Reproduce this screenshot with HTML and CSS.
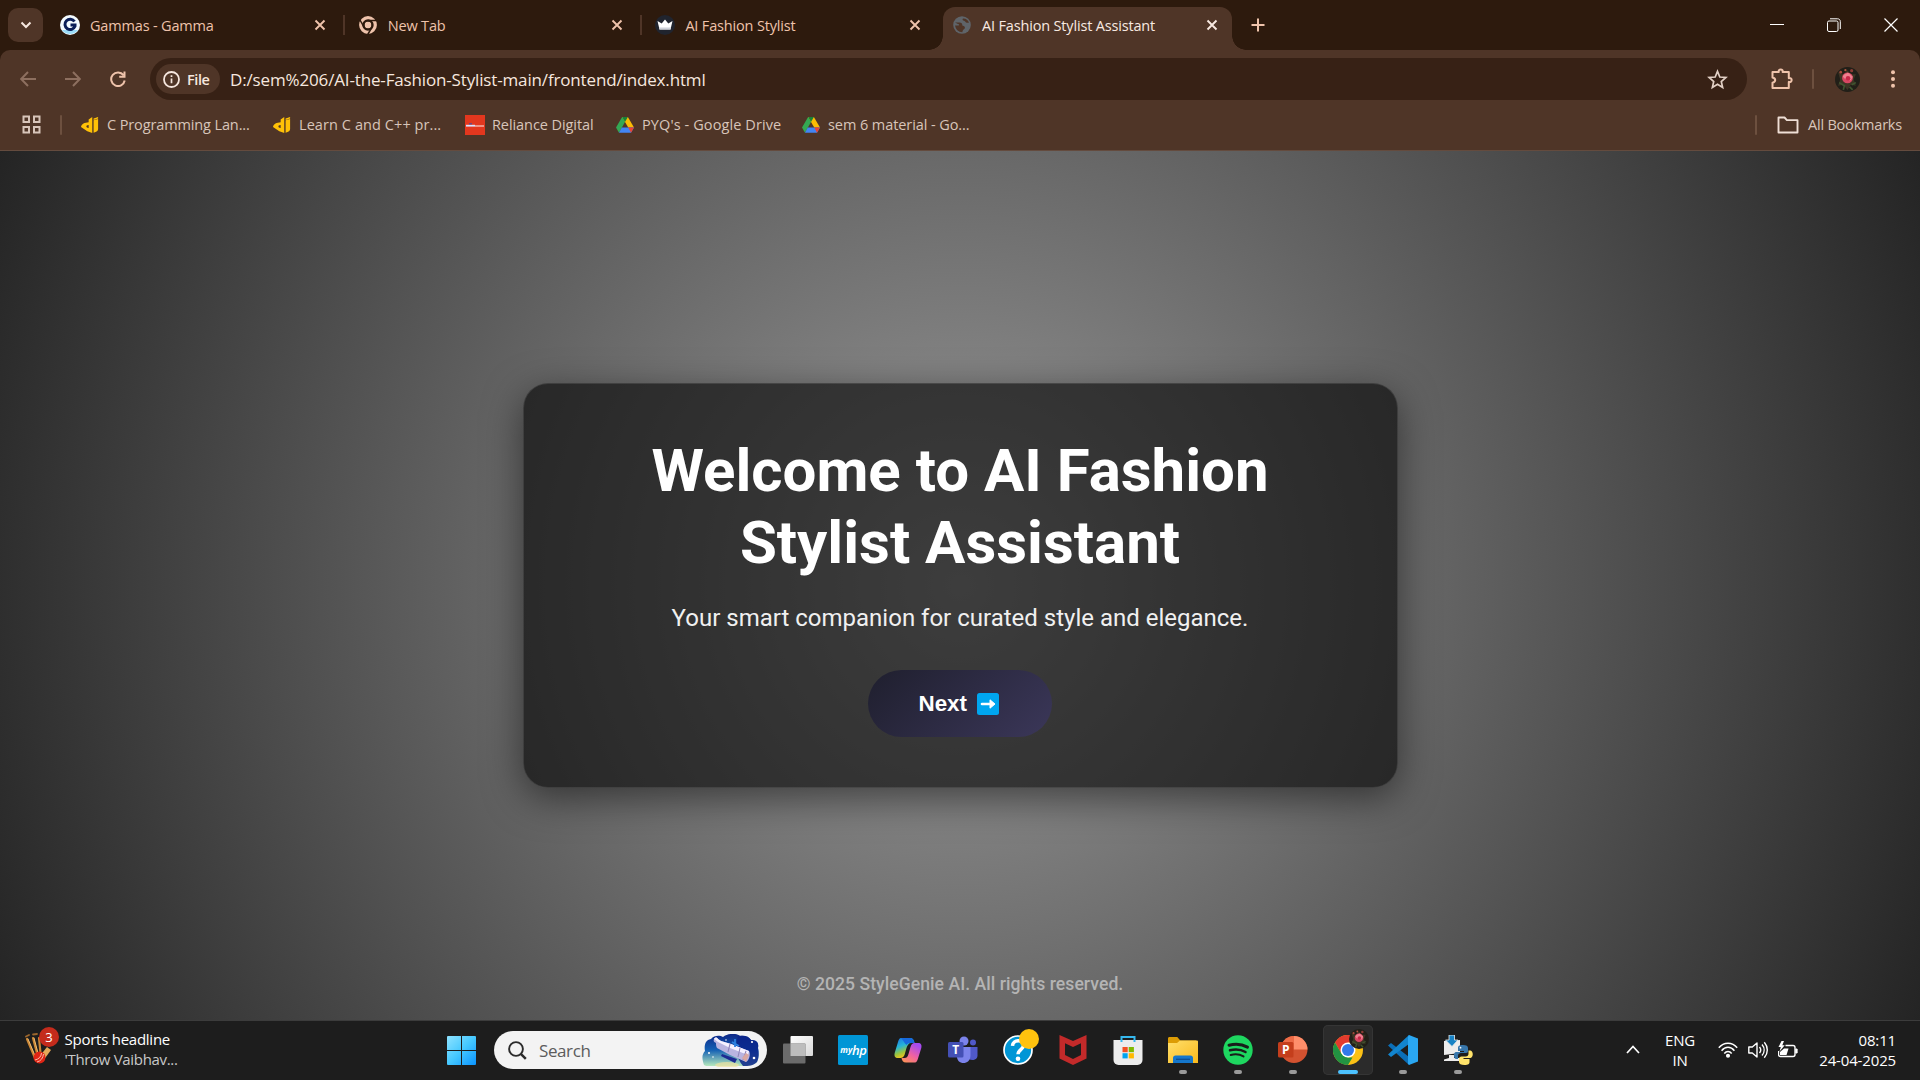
FILE: index.html
```html
<!DOCTYPE html>
<html lang="en">
<head>
<meta charset="utf-8">
<title>AI Fashion Stylist Assistant</title>
<link rel="stylesheet" href="styles.css">
</head>
<body>
<svg class="defs" width="0" height="0" aria-hidden="true">
  <defs>
    <symbol id="close" viewBox="0 0 12 12"><path d="M1.5 1.5l9 9M10.5 1.5l-9 9" fill="none" stroke="currentColor" stroke-width="1.9"/></symbol>
    <symbol id="drive" viewBox="0 0 20 18"><path d="M6.8 0h6.4L10 5.6 3.3 17.6 0 11.8z" fill="#34a853"/><path d="M13.2 0L20 11.8h-6.4L6.8 0z" fill="#fbbc04"/><path d="M6.8 0h6.4L10 5.6z" fill="#188038"/><path d="M6.4 11.8H20l-3.3 5.9H3.3z" fill="#4285f4"/><path d="M13.6 11.8H20l-3.3 5.9z" fill="#ea4335"/></symbol>
    <symbol id="dj" viewBox="0 0 20 20"><path d="M12.500 1v18L7 17 0 12.200C.5 9 4 7.200 8.500 7V4zM8.500 10c-2 .2-2.500.9-2.500 1.700s.8 1.300 2.500 1.600z" fill="#ffc107" fill-rule="evenodd"/><path d="M14 4.800l5-1.400v11.100c0 2-1.500 3.200-5 4zM14 2.700l5-1.700v1.900l-5 1.500z" fill="#ffc107"/></symbol>
    <symbol id="rose" viewBox="0 0 24 24"><circle cx="12" cy="12" r="12" fill="#211f18"/><path d="M3 5l5 2 4-4 3 4 5 0-2 5 2 6-5-1-3 5-4-5-5 1 2-6z" fill="#3d3524"/><path d="M4 15l5 3-1 4M16 17l4-2M14 19l3 3" stroke="#3f5530" stroke-width="1.600" fill="none"/><circle cx="12" cy="10.500" r="5.200" fill="#d64762"/><path d="M7.500 9c1.500-3 3.500-2 4.500-3.500 2 0 3 2.500 5 3.500-.5 2-1 2.500-2.500 4-3-2-4.500 0-7-4" fill="#f0808f"/><circle cx="12.500" cy="10.800" r="2.200" fill="#c72747"/><circle cx="5.500" cy="5" r="1.300" fill="#a24a3c"/><circle cx="16" cy="3.500" r="1.500" fill="#8c3c34"/><circle cx="10" cy="3" r="1.100" fill="#b0573f"/></symbol>
    <linearGradient id="winG" x2="1" y2="1"><stop stop-color="#8fe3ff"/><stop offset=".5" stop-color="#45c8ff"/><stop offset="1" stop-color="#0a93ff"/></linearGradient>
    <linearGradient id="copL" x2=".4" y2="1"><stop stop-color="#1c6fe4"/><stop offset=".45" stop-color="#25b5d8"/><stop offset=".75" stop-color="#9bc53d"/><stop offset="1" stop-color="#ffc21a"/></linearGradient>
    <linearGradient id="copR" x1=".6" x2="0" y2="1"><stop stop-color="#a64bf0"/><stop offset=".5" stop-color="#f062a0"/><stop offset="1" stop-color="#ff9a4a"/></linearGradient>
    <linearGradient id="foldG" x2="1" y2="1"><stop stop-color="#ffdf6b"/><stop offset="1" stop-color="#f9b91c"/></linearGradient>
    <linearGradient id="spaceG" x2="0" y2="1"><stop stop-color="#0d2687"/><stop offset=".5" stop-color="#1360b4"/><stop offset="1" stop-color="#b5e8bd"/></linearGradient>
    <linearGradient id="tvG" x2="1" y2="1"><stop stop-color="#fff"/><stop offset="1" stop-color="#d8d8d8"/></linearGradient>
  </defs>
</svg>

<header class="browser">
  <div class="tabstrip">
    <button class="tab-search"><svg width="12" height="8" viewBox="0 0 12 8"><path d="M1.500 1.500L6 6l4.500-4.500" fill="none" stroke="#f6e7df" stroke-width="2"/></svg></button>
    <div class="tab">
      <svg class="fav" viewBox="0 0 20 20"><circle cx="10" cy="10" r="10" fill="#f4fbff"/><path d="M2 15a10 10 0 0 0 16 0z" fill="#9adcf8"/><path d="M14.500 6.500A5.200 5.200 0 1 0 15 11.300V10h-4.500" fill="none" stroke="#0b1e57" stroke-width="3"/></svg>
      <span class="title">Gammas - Gamma</span><svg class="x"><use href="#close"/></svg>
    </div>
    <div class="tab">
      <svg class="fav" viewBox="0 0 20 20"><circle cx="10" cy="10" r="7.300" fill="none" stroke="#efc3ab" stroke-width="3.200"/><circle cx="10" cy="10" r="3.400" fill="#efc3ab"/><circle cx="10" cy="10" r="4.300" fill="none" stroke="#2d1a0d" stroke-width="1.400"/><path d="M10 5.500h8.500M6.200 12.300L2 5M13.900 12.300L9.700 19.500" stroke="#2d1a0d" stroke-width="1.500"/></svg>
      <span class="title">New Tab</span><svg class="x"><use href="#close"/></svg>
    </div>
    <div class="tab last">
      <svg class="fav" viewBox="0 0 20 20"><circle cx="10" cy="10" r="10" fill="#20242e"/><path d="M2.500 6l4.200 2.600L10 4.500l3.300 4.100L17.500 6l-2 8.500h-11z" fill="#fff"/><path d="M4 12.500h12l-.5 2h-11z" fill="#cfd2da"/></svg>
      <span class="title">AI Fashion Stylist</span><svg class="x"><use href="#close"/></svg>
    </div>
    <div class="tab active">
      <svg class="fav" viewBox="0 0 20 20"><circle cx="10" cy="10" r="8.800" fill="#5f6469"/><path d="M3 7.500h4.500c2 0 2.800 1 2.800 2.500 0 1.200 2.600.7 2.600 2.500 0 2-2.300 1.500-2.500 4.800-4-.3-7-3-7.300-6.800h3.200c1.400 0 1-1.500-.3-1.500zM11 3.500c-1 1.200-.2 2 1 2.300 1.500.3 1.200 2 3 2h2c-.8-2.600-3-4.500-6-4.300z" fill="#4f3527"/></svg>
      <span class="title">AI Fashion Stylist Assistant</span><svg class="x"><use href="#close"/></svg>
    </div>
    <button class="newtab"><svg width="14" height="14" viewBox="0 0 14 14"><path d="M7 .5v13M.5 7h13" stroke="#efc3ab" stroke-width="2"/></svg></button>
    <div class="winctl">
      <svg width="14" height="14" viewBox="0 0 14 14"><path d="M0 6.500h14" stroke="#fff"/></svg>
      <svg width="14" height="14" viewBox="0 0 14 14" fill="none" stroke="#fff"><rect x=".5" y="3" width="10.500" height="10.500" rx="1.500"/><path d="M3 .8h7.500c1.700 0 2.800 1 2.800 2.800V11"/></svg>
      <svg width="14" height="14" viewBox="0 0 14 14"><path d="M.5.5l13 13M13.500.5l-13 13" stroke="#fff" stroke-width="1.200"/></svg>
    </div>
  </div>

  <div class="toolbar">
    <div class="nav">
      <svg class="dim" width="16" height="16" viewBox="0 0 16 16"><path d="M16 8H1.500M8 1L1.200 8 8 15"/></svg>
      <svg class="dim" width="16" height="16" viewBox="0 0 16 16"><path d="M0 8h14.500M8 1l6.800 7L8 15"/></svg>
      <svg width="16" height="16" viewBox="0 0 16 16"><path d="M13.500 4.200A6.800 6.800 0 1 0 14.700 9.500M14.500.5v5.300H9.200"/></svg>
    </div>
    <div class="omnibox">
      <span class="chip"><svg width="17" height="17" viewBox="0 0 17 17"><circle cx="8.500" cy="8.500" r="7.500" fill="none" stroke="#f6e7df" stroke-width="1.800"/><path d="M8.500 7.500v4.800M8.500 4.300v1.800" stroke="#f6e7df" stroke-width="1.700"/></svg><span>File</span></span>
      <span class="url">D:/sem%206/AI-the-Fashion-Stylist-main/frontend/index.html</span>
      <svg class="star" viewBox="0 0 20 20"><path d="M10 2.200l2.200 5.400 5.800.5-4.400 3.800 1.300 5.700-4.900-3-4.900 3 1.300-5.700L2 8.100l5.800-.5z" fill="none" stroke="#e3d1c6" stroke-width="1.600"/></svg>
    </div>
    <div class="actions">
      <svg width="22" height="22" viewBox="0 0 22 22"><path d="M1.500 4h6.300a2 2 0 1 1 3.800 0h6.200v6.300a2 2 0 1 1 0 3.600v6.100H1.500v-5.200c3.600-.8 3.600-4.600 0-5.400z" fill="none" stroke="#efc3ab" stroke-width="2" stroke-linejoin="round"/></svg>
      <i class="sep"></i>
      <svg class="avatar" width="25" height="25"><use href="#rose"/></svg>
      <svg width="4" height="18" viewBox="0 0 4 18" fill="#efc3ab"><circle cx="2" cy="2.200" r="2"/><circle cx="2" cy="9" r="2"/><circle cx="2" cy="15.800" r="2"/></svg>
    </div>
  </div>

  <div class="bookmarks">
    <svg class="apps" width="19" height="19" viewBox="0 0 19 19" fill="none" stroke="#d8c5ba" stroke-width="2"><path d="M1.500 1.500h5.500V7H1.500zM12 1.500h5.500V7H12zM1.500 12h5.500v5.500H1.500zM12 12h5.500v5.500H12z"/></svg>
    <i class="sep"></i>
    <div class="bm b1"><svg><use href="#dj"/></svg><span>C Programming Lan...</span></div>
    <div class="bm b2"><svg><use href="#dj"/></svg><span>Learn C and C++ pr...</span></div>
    <div class="bm b3"><svg viewBox="0 0 20 20"><path d="M0 0h20v20H0z" fill="#e3371e"/><path d="M1 10.700h9" stroke="#d8e2ff" stroke-width="1.800"/><path d="M10 11h9" stroke="#fff" stroke-opacity=".65" stroke-width="1.400"/><path d="M4 8.800h3" stroke="#3d4aa5"/></svg><span>Reliance Digital</span></div>
    <div class="bm b4"><svg><use href="#drive"/></svg><span>PYQ's - Google Drive</span></div>
    <div class="bm b5"><svg><use href="#drive"/></svg><span>sem 6 material - Go...</span></div>
    <div class="allbm"><i class="sep"></i><svg width="22" height="18" viewBox="0 0 22 18"><path d="M1.500 1.500h6l2.400 2.600h10.600v12.400h-19z" fill="none" stroke="#efdfd6" stroke-width="1.900" stroke-linejoin="round"/></svg><span>All Bookmarks</span></div>
  </div>
</header>

<main class="page">
  <section class="card">
    <h1>Welcome to AI Fashion Stylist Assistant</h1>
    <p>Your smart companion for curated style and elegance.</p>
    <button class="next"><span>Next</span><svg width="22" height="22" viewBox="0 0 22 22"><rect width="22" height="22" rx="2.500" fill="#00a6f0"/><path d="M5 11h10" stroke="#fff" stroke-width="2.600" stroke-linecap="round"/><path d="M13 6.800l5 4.200-5 4.200z" fill="#fff" stroke="#fff" stroke-linejoin="round"/></svg></button>
  </section>
  <footer>© 2025 StyleGenie AI. All rights reserved.</footer>
</main>

<nav class="taskbar">
  <div class="widget">
    <div class="badgebox">
      <svg width="30" height="34" viewBox="0 0 30 34"><g fill="none" stroke-linecap="round"><path d="M2 6l8 19M8 5l4.500 17M14 5l1.500 15" stroke="#c98535" stroke-width="2.200"/><path d="M3 6l8 19M9 5l4.500 17" stroke="#f0bd72" stroke-width="1"/><path d="M1 3.500L4 2M8 1.500l4-.5" stroke="#9c662c" stroke-width="1.800"/></g><path d="M22 14l4 3-8 11-4-4z" fill="#e5a959"/><circle cx="14.500" cy="24.500" r="6" fill="#df2515"/><path d="M12 29c4-1 6-4 6.500-8M10 27c4-1 6-3 6.500-7" stroke="#ffc9b8" stroke-width=".9" fill="none"/></svg>
      <b class="badge">3</b>
    </div>
    <div class="news"><span class="n1">Sports headline</span><span class="n2">'Throw Vaibhav...</span></div>
  </div>

  <div class="center">
    <svg class="start" width="29" height="29" viewBox="0 0 29 29"><path d="M0 1a1 1 0 0 1 1-1h13v14H0zM15 0h13a1 1 0 0 1 1 1v13H15zM0 15h14v14H1a1 1 0 0 1-1-1zM15 15h14v13a1 1 0 0 1-1 1H15z" fill="url(#winG)"/></svg>
    <div class="search">
      <svg width="19" height="19" viewBox="0 0 19 19" fill="none" stroke="#2b2b2b"><circle cx="8" cy="8" r="6.900" stroke-width="1.900"/><path d="M12.800 12.800l5 5" stroke-width="2.500"/></svg>
      <span>Search</span>
      <svg class="scope" width="58" height="33" viewBox="0 0 58 33"><path d="M2 31C0 25-.5 21 3 17c-1-5 0-11 6-12 3-4 9-4 12-2 5-4 14-4 17-1 5-1 9 0 11 4 6 0 8 3 7 8 1 5 1 10-1 14-3 4-12 4-17 4H8c-3 0-5 0-6-1z" fill="url(#spaceG)"/><path d="M36 2c5-1 11 1 13 4 6 0 8 3 7 8 1 5 1 10-1 14-4 4-8 4-14 4-7-8-8-20-5-30z" fill="#0a2389" opacity=".85"/><ellipse cx="25" cy="31" rx="12" ry="3" fill="#f0dfa0" opacity=".7"/><path d="M20 20l15 5-2 4-14-7z" fill="#1c2a92"/><path d="M12 5c1-2 3-2 4 0l3 2 10 3 18 7c2 3 0 10-3 11L28 21l-13-7c-1-2-1-3-1-5-2-1-3-2-2-4z" fill="#b9b4e0"/><path d="M12 5c1-2 3-2 4 0l3 2 10 3 18 7-1 4-18-7-12-6z" fill="#f4f0ff"/><path d="M28 10l-2 8M38 14l-2 9M44 17l-3 9" stroke="#9085ba" stroke-width="1.100"/><path d="M40 24l4-5 3 2-3 7z" fill="#d9a7a2"/><path d="M33 5v8M30 8l7 4" stroke="#2b7fe0" stroke-width="1.800"/><g fill="#fff"><circle cx="7" cy="19" r="1"/><circle cx="24" cy="6" r=".8"/><circle cx="50" cy="8" r="1.100"/><circle cx="52" cy="24" r="1.300"/><circle cx="11" cy="23" r=".8"/></g></svg>
    </div>
    <div class="apps-row">
      <div class="slot"><svg viewBox="0 0 30 30"><rect x="7.500" y="1" width="22.500" height="20" rx="1" fill="url(#tvG)"/><rect x="0" y="8.500" width="22.500" height="20" rx="1" fill="#6b6b6b"/><path d="M7.500 8.500h15V21h-15z" fill="#bdbdbd"/></svg></div>
      <div class="slot"><svg viewBox="0 0 30 30"><rect width="30" height="30" rx="1.500" fill="#0096d6"/><text class="my" x="2.200" y="18">my</text><text class="hp" x="14" y="19.500">hp</text></svg></div>
      <div class="slot"><svg viewBox="0 0 30 30"><path d="M8 3h9c3 0 4 2 4.500 5h-3c-3 0-4 2-5 5l-2 7c-1 2-2 3-4 3H5c-3 0-4-2-3.300-5L5 7c.6-2.300 1.500-4 3-4z" fill="url(#copL)"/><path d="M8 3h9c3 0 4 2 4.500 5h-4c-2 0-3 .6-4 2C11 8 10 4.500 8 3z" fill="#1769dc"/><path d="M22 27.500h-9c-3 0-4-2-4.500-4.500h3c2 0 3-1 4-4l2-7c1-3 2-4 4-4H25c3 0 4 2 3.300 5L25 23.500c-.6 2.300-1.500 4-3 4z" fill="url(#copR)"/></svg></div>
      <div class="slot"><svg viewBox="0 0 30 30"><circle cx="25" cy="7.500" r="3" fill="#5059c9"/><path d="M19 12h10.500v8.500c0 3-2.500 4.500-5 4.500s-5-1-6-4z" fill="#5059c9"/><circle cx="16" cy="6" r="4.500" fill="#7b83eb"/><path d="M9 12h13.500v8.500c0 5-3.500 7.500-7 7.500S8.500 25.500 9 20.500z" fill="#7b83eb"/><rect x="0" y="7" width="15.500" height="15.500" rx="1.500" fill="#4450b5"/><text class="glyph" x="7.800" y="19" font-size="12">T</text></svg></div>
      <div class="slot"><svg viewBox="0 0 30 30"><circle cx="15" cy="15" r="14" fill="#0096d6" stroke="#fff" stroke-width="1.700"/><path d="M9.500 10.800c.3-6.500 11-6.600 11-.5 0 4.500-5.500 4.200-5.500 9" fill="none" stroke="#fff" stroke-width="3.500"/><circle cx="15" cy="23.700" r="2.300" fill="#fff"/></svg><i class="dot"></i></div>
      <div class="slot"><svg viewBox="0 0 30 30"><path d="M1.500 0L15 6 28.500 0v23.500L15 30 1.500 23.500z" fill="#c32a2a"/><path d="M7 8.200l8 3.700 8-3.700v11.700l-8 4-8-4z" fill="#1d1d1d"/></svg></div>
      <div class="slot"><svg viewBox="0 0 30 30"><path d="M.5 5h29v20a5 5 0 0 1-5 5h-19a5 5 0 0 1-5-5z" fill="#ececec"/><path d="M8.500 7V2h13v5" fill="none" stroke="#35b8ee" stroke-width="2"/><path d="M9.500 12h5.200v5.200H9.500z" fill="#f25022"/><path d="M15.700 12h5.200v5.200h-5.200z" fill="#7fba00"/><path d="M9.500 18.200h5.200v5.200H9.500z" fill="#00a4ef"/><path d="M15.700 18.200h5.200v5.200h-5.200z" fill="#ffb900"/></svg></div>
      <div class="slot run"><svg viewBox="0 0 30 30"><path d="M0 3.500C0 2.500.7 2 1.500 2h7.800l3 3.500H28V12H0z" fill="#dc9c05"/><path d="M0 8h9l3-2.500h17a1 1 0 0 1 1 1V28H0z" fill="url(#foldG)"/><path d="M5 28v-5c0-1.500 1-2.500 2.500-2.500h15c1.500 0 2.500 1 2.500 2.500v5z" fill="#1577cc"/><path d="M8 24.300h14" stroke="#0b4f94" stroke-width="1.300"/></svg></div>
      <div class="slot run"><svg viewBox="0 0 30 30"><circle cx="15" cy="15" r="14.700" fill="#1ed760"/><g fill="none" stroke="#191d1a" stroke-linecap="round"><path d="M6 10.200c6-1.700 13-1.200 18.500 1.900" stroke-width="3"/><path d="M7 15.300c5.500-1.500 11-.9 15.500 1.700" stroke-width="2.500"/><path d="M7.700 20c4.500-1.200 9-.8 12.800 1.400" stroke-width="2"/></g></svg></div>
      <div class="slot run"><svg viewBox="0 0 30 30"><circle cx="16" cy="14.500" r="13.500" fill="#d35230"/><path d="M16 1a13.500 13.500 0 0 0-13.500 13.500H16z" fill="#ed6c47"/><path d="M16 1a13.500 13.500 0 0 1 13.500 13.500H16z" fill="#ff8f6b"/><rect x="0" y="7" width="15.500" height="15.500" rx="1.500" fill="#c43e1c"/><text class="glyph" x="7.700" y="19" font-size="12">P</text></svg></div>
      <div class="slot current"><svg viewBox="0 0 30 30"><circle cx="15" cy="15" r="15" fill="#fbc116"/><path d="M2 7.500a15 15 0 0 1 26 0H15V15L8.500 18.800z" fill="#e33b2e"/><path d="M2 7.500L8.500 18.800l6.500 3.700h4.500L15 30A15 15 0 0 1 2 7.500z" fill="#229342"/><circle cx="15" cy="15" r="7.500" fill="#fff"/><circle cx="15" cy="15" r="6" fill="#3279ea"/></svg><svg class="rose"><use href="#rose"/></svg></div>
      <div class="slot run"><svg viewBox="0 0 30 30"><path d="M0 10.500l3-2.500L23 23.500 21 30z" fill="#0b6fb8"/><path d="M0 19.500l3 2.500L23 7.500 21 0z" fill="#1285cf"/><path d="M21 0l9 3.500v23L21 30l-1-1.500V1.500z" fill="#2aa7f2"/></svg></div>
      <div class="slot run"><svg viewBox="0 0 30 30"><path d="M1 6l16-1v13L1 20zM6 20h5v3h6v3H1v-1.500l5-1.500z" fill="#ececec"/><path d="M6 0h5.500v5H15l-6 6.500L2.500 5H6z" fill="#1782c5" stroke="#ececec" stroke-width=".8"/><path d="M20 10c-4 0-5 1-5 3v3h6v1h-8c-2.500 0-3 6 0 7h2v-3c0-2 1-3 3-3h5c1.500 0 2-1 2-2v-3c0-2-1.500-3-5-3z" fill="#3776ab"/><path d="M21.500 30c4 0 5-1.200 5-3v-3h-6v-1h7c3-1 3-6.500 0-7.500h-2v3c0 2-1 3-3 3h-4c-1.500 0-2.500 1-2.500 2.500V27c0 2 2 3 5.500 3z" fill="#ffe36a"/><circle cx="17.500" cy="12.700" r=".9" fill="#fff"/></svg></div>
    </div>
  </div>

  <div class="tray">
    <svg class="up" width="14" height="9" viewBox="0 0 14 9"><path d="M1 8l6-6.500L13 8" fill="none" stroke="#fff" stroke-width="1.700"/></svg>
    <div class="lang"><span>ENG</span><span>IN</span></div>
    <svg class="wifi" width="20" height="16" viewBox="0 0 20 16" fill="none" stroke="#fff" stroke-width="1.500"><path d="M.8 5.800c5-6.200 13.400-6.200 18.400 0M3.600 8.700c3.600-4.500 9.200-4.500 12.800 0M6.300 11.500c2.200-2.700 5.200-2.700 7.400 0"/><circle cx="10" cy="13.800" r="1.300" fill="#fff"/></svg>
    <svg class="vol" width="20" height="18" viewBox="0 0 20 18" fill="none" stroke="#fff" stroke-width="1.400"><path d="M.8 6h3.500L9 2v14l-4.700-4H.8z" stroke-linejoin="round"/><path d="M11.500 6c1.500 1.800 1.500 4.200 0 6M14 3.500c2.800 3.300 2.800 7.700 0 11M16.300 1.200c4 4.600 4 11 0 15.600"/></svg>
    <svg class="bat" width="20" height="18" viewBox="0 0 20 18"><path d="M7.500 4.500H15a2 2 0 0 1 2 2v7a2 2 0 0 1-2 2H2.500a2 2 0 0 1-2-2V10" fill="none" stroke="#fff" stroke-width="1.400"/><path d="M17.800 8h1.300v4h-1.300z" fill="#fff" stroke="#fff"/><path d="M2 14v-3l4-3.500h4.500L8.500 14z" fill="#fff"/><path d="M3.500 0L.5 6h2.300L1.500 10.500 6.700 4.300H4.300L6 0z" fill="#fff"/></svg>
    <div class="clock"><span class="time">08:11</span><span class="date">24-04-2025</span></div>
  </div>
</nav>
</body>
</html>
```
FILE: styles.css
```css
* { box-sizing: border-box; }

body {
  margin: 0;
  width: 1920px;
  height: 1080px;
  overflow: hidden;
  display: flex;
  flex-direction: column;
  font-family: "Open Sans", "Noto Sans", sans-serif;
  font-size: 15px;
  background: #1d1d1d;
}

button { border: 0; padding: 0; margin: 0; font: inherit; }
svg { display: block; flex: none; }
.defs { position: absolute; }
span { white-space: nowrap; }

/* browser chrome */
.browser {
  height: 151px;
  flex: none;
  background: #2d1a0d;
  display: grid;
  grid-template-rows: 50px 58px 43px;
}

.tabstrip { display: flex; align-items: center; padding-left: 8px; }

.tab-search {
  width: 35px;
  height: 34px;
  margin-right: 4px;
  border-radius: 10px;
  background: #4f3527;
  display: grid;
  place-items: center;
}

.tab {
  width: 297.7px;
  height: 20px;
  padding: 0 13px 0 13px;
  display: flex;
  align-items: center;
  color: #efc3ab;
  border-right: 2px solid #4f3527;
}
.tab.last { border-color: transparent; }
.fav { width: 20px; height: 20px; margin-right: 10px; }
.title { flex: 1; line-height: 20px; padding-top: 2px; font-size: 14.5px; letter-spacing: -0.17px; }
.x { width: 12px; height: 12px; margin-right: 4px; }

.tab.active {
  position: relative;
  width: 289px;
  height: 43px;
  align-self: flex-end;
  margin-left: 3px;
  padding: 0 10px 7px 9px;
  border: 0;
  border-radius: 12px 12px 0 0;
  background: #4f3527;
  color: #f8e9e1;
}
.tab.active::before,
.tab.active::after {
  content: "";
  position: absolute;
  bottom: 0;
  width: 14px;
  height: 14px;
}
.tab.active::before { left: -14px; background: radial-gradient(circle at 0 0, transparent 13.5px, #4f3527 14px); }
.tab.active::after { right: -14px; background: radial-gradient(circle at 100% 0, transparent 13.5px, #4f3527 14px); }

.newtab { width: 51px; background: none; display: grid; place-items: center; }
.winctl { margin-left: auto; padding-right: 22px; display: flex; gap: 43px; }

.toolbar {
  background: #4f3527;
  border-radius: 10px 10px 0 0;
  display: flex;
  align-items: center;
}
.nav { width: 150px; padding-left: 20px; display: flex; gap: 29px; }
.nav svg { fill: none; stroke: #efc3ab; stroke-width: 2; }
.nav .dim { stroke: #8d6f5f; }

.omnibox {
  width: 1597px;
  height: 42px;
  padding: 0 19px 0 6px;
  border-radius: 21px;
  background: #372115;
  display: flex;
  align-items: center;
}
.chip {
  width: 64px;
  height: 30px;
  padding-left: 7px;
  border-radius: 15px;
  background: #4f3527;
  color: #f6e7df;
  display: flex;
  align-items: center;
  gap: 7px;
  font-size: 14.5px;
  font-weight: 600;
  letter-spacing: -0.4px;
}
.url { margin-left: 10px; flex: 1; font-size: 17px; color: #f6e7df; letter-spacing: -0.15px; }
.star { width: 21px; height: 21px; }

.actions { flex: 1; display: flex; align-items: center; padding-left: 24px; }
.sep { width: 2px; height: 20px; background: #6d503f; border-radius: 1px; }
.actions .sep { margin-left: 19px; }
.avatar { margin-left: 21px; }
.actions svg:last-child { margin-left: 31px; }

.bookmarks {
  background: #4f3527;
  border-bottom: 1px solid #644b3e;
  display: flex;
  align-items: center;
  padding: 0 18px 9px 22px;
  color: #d8c5ba;
  font-size: 14.5px;
}
.bookmarks > .sep { margin: 0 19px 0 19px; }
.bm { display: flex; align-items: center; gap: 8px; letter-spacing: -0.08px; }
.bm svg { width: 18px; height: 18px; }
.b1, .b2 { width: 192px; }
.b1 { letter-spacing: -0.12px; }
.b2 { letter-spacing: 0.08px; }
.b3 { width: 151px; gap: 7px; }
.b3 svg { width: 20px; height: 20px; }
.b4 { width: 186px; letter-spacing: 0.1px; }
.allbm { margin-left: auto; display: flex; align-items: center; letter-spacing: -0.2px; }
.allbm svg { margin: 0 9px 0 20px; }

/* web page */
.page {
  flex: 1;
  display: flex;
  flex-direction: column;
  align-items: center;
  padding-top: 232px;
  font-family: Roboto, sans-serif;
  background: radial-gradient(circle at 50% 50%, #999, #242424);
}

.card {
  width: 875px;
  height: 405px;
  padding: 51px 100px 50px;
  border: 1px solid rgba(255, 255, 255, 0.1);
  border-radius: 25px;
  background: rgba(0, 0, 0, 0.6);
  box-shadow: 0 10px 38px rgba(0, 0, 0, 0.5);
  display: flex;
  flex-direction: column;
  align-items: center;
  text-align: center;
}
.card h1 {
  margin: 0;
  font-size: 60px;
  line-height: 72px;
  font-weight: 700;
  color: #fff;
}
.card p {
  margin: 23px 0 0;
  font-size: 24px;
  line-height: 32px;
  color: #f0f0f0;
  white-space: nowrap;
}
.next {
  width: 184px;
  height: 68px;
  margin-top: 36px;
  padding: 1px 3px 0 0;
  border-radius: 34px;
  background: linear-gradient(135deg, #1f1f2e, #3b3759);
  color: #fff;
  font-family: "Liberation Sans", Arial, sans-serif;
  font-size: 22.4px;
  font-weight: 700;
  display: flex;
  align-items: center;
  justify-content: center;
  gap: 9.5px;
}

footer {
  margin-top: 185px;
  font-size: 17.6px;
  font-weight: 500;
  line-height: 22px;
  letter-spacing: 0.04px;
  color: #b4b4b4;
}

/* taskbar */
.taskbar {
  height: 60px;
  flex: none;
  border-top: 1px solid #3c3c3c;
  background: #1d1d1d;
  color: #fff;
  display: flex;
}
.widget { width: 447px; padding: 6px 0 0 25px; display: flex; }
.badgebox { position: relative; width: 39.5px; padding-top: 6px; height: 40px; }
.badge {
  position: absolute;
  left: 14px;
  top: 0;
  width: 20px;
  height: 20px;
  border-radius: 50%;
  background: #c42b1c;
  font-size: 13px;
  font-weight: 400;
  line-height: 20px;
  text-align: center;
}
.news { display: flex; flex-direction: column; padding-top: 2px; font-size: 15px; line-height: 20px; }
.n1 { letter-spacing: -0.25px; }
.n2 { letter-spacing: -0.32px; color: #c8c8c8; }

.center { display: flex; align-items: center; padding-bottom: 1px; }
.search {
  width: 273px;
  height: 38px;
  margin-left: 18px;
  margin-right: 3.5px;
  padding: 0 7px 0 14px;
  border-radius: 19px;
  background: #f3f3f3;
  color: #5c5c5c;
  display: flex;
  align-items: center;
}
.search span { margin-left: 12px; flex: 1; font-size: 17px; letter-spacing: -0.4px; }
.apps-row { display: flex; }
.slot {
  position: relative;
  width: 50px;
  height: 50px;
  margin: 0 2.5px;
  display: grid;
  place-items: center;
}
.slot svg { width: 30px; height: 30px; }
.dot { position: absolute; left: 26px; top: 4px; width: 20px; height: 20px; border-radius: 50%; background: #ffc20e; }
.run::after, .current::after {
  content: "";
  position: absolute;
  left: 21px;
  bottom: 1px;
  width: 8px;
  height: 4px;
  border-radius: 2px;
  background: #9a9a9a;
}
.current { background: #2b2b2b; border-radius: 5px; box-shadow: inset 0 0 0 1px #353535; }
.current::after { left: 15px; width: 20px; background: #4cc2ff; }
.slot .rose { position: absolute; left: 26px; top: 4px; width: 20px; height: 20px; }
.glyph { font-family: "Open Sans", sans-serif; font-weight: 700; fill: #fff; text-anchor: middle; }
.my { font: italic 700 8.5px "Open Sans", sans-serif; fill: #fff; }
.hp { font: italic 600 13px "Open Sans", sans-serif; fill: #fff; letter-spacing: -0.5px; }

.tray { flex: 1; display: flex; align-items: center; justify-content: flex-end; padding: 0 24px 2px 0; }
.lang, .clock { display: flex; flex-direction: column; line-height: 20px; }
.lang { width: 32px; margin-left: 24px; align-items: center; letter-spacing: -0.2px; }
.wifi { margin-left: 22px; }
.vol, .bat { margin-left: 10px; }
.clock { width: 79px; margin-left: 19px; align-items: flex-end; font-size: 15px; letter-spacing: -0.15px; }
```
